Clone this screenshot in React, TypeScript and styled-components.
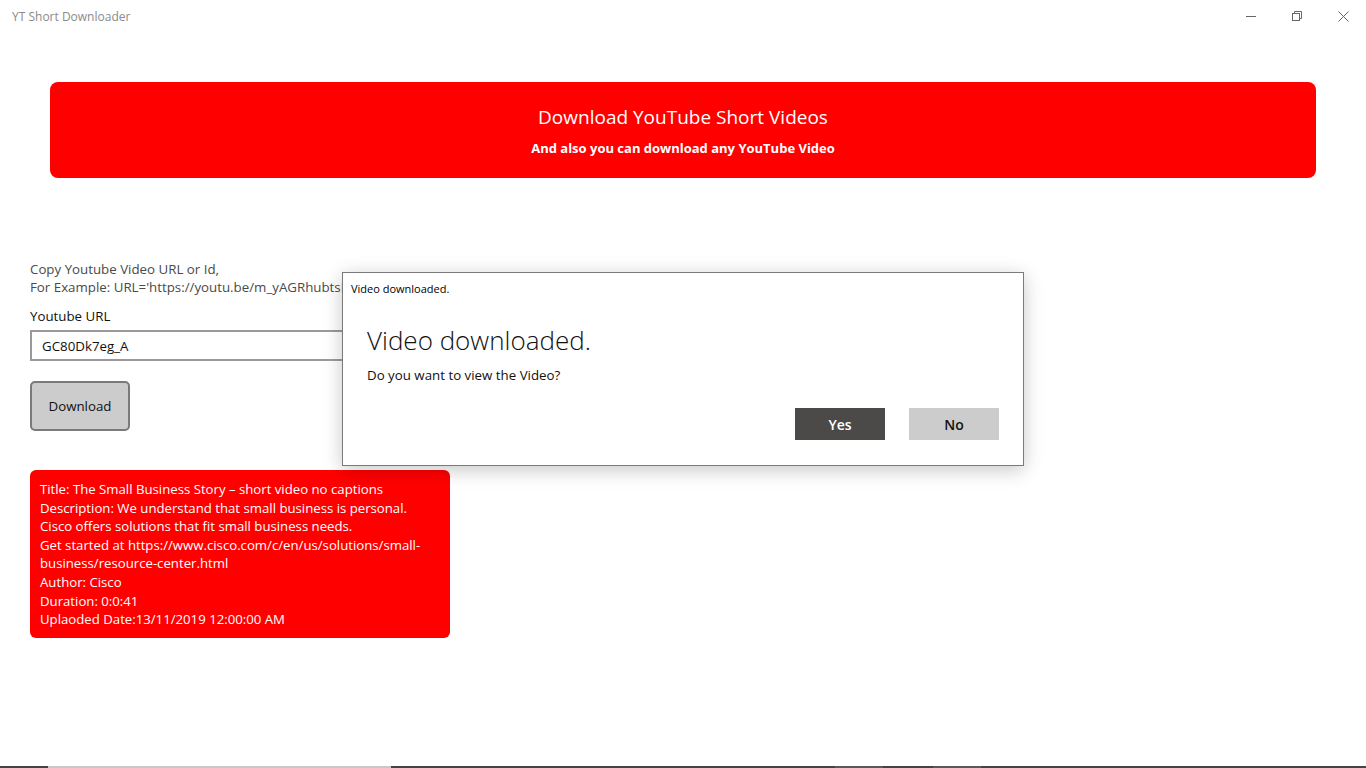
import styled, { createGlobalStyle } from "styled-components";

const GlobalStyle = createGlobalStyle`
  html, body {
    margin: 0;
    padding: 0;
    background: #ffffff;
    font-family: "Open Sans", "Noto Sans", sans-serif;
  }
  * { box-sizing: border-box; }
`;

const info = [
  "Title: The Small Business Story \u2013 short video no captions",
  "Description: We understand that small business is personal.",
  "Cisco offers solutions that fit small business needs.",
  "Get started at https://www.cisco.com/c/en/us/solutions/small-business/resource-center.html",
  "Author: Cisco",
  "Duration: 0:0:41",
  "Uplaoded Date:13/11/2019 12:00:00 AM",
];

export default function App() {
  return (
    <>
      <GlobalStyle />
      <Window>
        <TitleBar>
          <AppTitle>YT Short Downloader</AppTitle>
          <Controls>
            <ControlButton aria-label="minimize">
              <svg width="10" height="10" viewBox="0 0 10 10">
                <path d="M0 5.5h10" stroke="#666" strokeWidth="1" />
              </svg>
            </ControlButton>
            <ControlButton aria-label="restore">
              <svg width="10" height="10" viewBox="0 0 10 10" fill="none">
                <rect x="0.5" y="2.5" width="7" height="7" stroke="#666" />
                <path d="M2.5 2.5V0.5h7v7h-2" stroke="#666" />
              </svg>
            </ControlButton>
            <ControlButton aria-label="close">
              <svg width="11" height="11" viewBox="0 0 11 11">
                <path d="M0.5 0.5l10 10M10.5 0.5l-10 10" stroke="#666" strokeWidth="1" />
              </svg>
            </ControlButton>
          </Controls>
        </TitleBar>

        <Content>
          <Banner>
            <BannerTitle>Download YouTube Short Videos</BannerTitle>
            <BannerSub>And also you can download any YouTube Video</BannerSub>
          </Banner>

          <Form>
            <Hint>
              Copy Youtube Video URL or Id,
              <br />
              For Example: URL='https://youtu.be/m_yAGRhubtsI' or Id='m_yAGRhubtsI'
            </Hint>
            <FieldLabel>Youtube URL</FieldLabel>
            <UrlInput defaultValue="GC80Dk7eg_A" />
            <DownloadButton>Download</DownloadButton>
            <InfoCard>
              {info.map((line) => (
                <div key={line}>{line}</div>
              ))}
            </InfoCard>
          </Form>
        </Content>

        <Dialog>
          <DialogCaption>Video downloaded.</DialogCaption>
          <DialogBody>
            <DialogHeading>Video downloaded.</DialogHeading>
            <DialogText>Do you want to view the Video?</DialogText>
            <DialogActions>
              <DialogButton $primary>Yes</DialogButton>
              <DialogButton>No</DialogButton>
            </DialogActions>
          </DialogBody>
        </Dialog>

        <Taskbar>
          <TaskSegment $w={48} />
          <TaskSegment $w={343} $light />
          <TaskSegment $w={444} />
          <TaskSegment $w={48} $mid />
          <TaskSegment $w={50} />
          <TaskSegment $w={48} $mid />
          <TaskSegment $w={385} />
        </Taskbar>
      </Window>
    </>
  );
}

const Window = styled.div`
  position: relative;
  width: 1366px;
  height: 768px;
  overflow: hidden;
  background: #fff;
  display: flex;
  flex-direction: column;
`;

const TitleBar = styled.div`
  height: 32px;
  display: flex;
  align-items: center;
  justify-content: space-between;
  padding-left: 12px;
`;

const AppTitle = styled.div`
  font-size: 12px;
  color: #8a8a8a;
`;

const Controls = styled.div`
  display: flex;
  height: 100%;
`;

const ControlButton = styled.div`
  width: 46px;
  height: 32px;
  display: flex;
  align-items: center;
  justify-content: center;
`;

const Content = styled.div`
  flex: 1;
  display: flex;
  flex-direction: column;
`;

const Banner = styled.div`
  margin: 50px 50px 0;
  height: 96px;
  background: #ff0000;
  border-radius: 8px;
  color: #fff;
  display: flex;
  flex-direction: column;
  align-items: center;
  padding-top: 22px;
`;

const BannerTitle = styled.div`
  font-size: 19px;
  line-height: 26px;
`;

const BannerSub = styled.div`
  font-size: 13px;
  font-weight: 700;
  margin-top: 9px;
`;

const Form = styled.div`
  margin: 82px 0 0 30px;
  width: 420px;
  display: flex;
  flex-direction: column;
  align-items: flex-start;
  font-size: 13.3px;
`;

const Hint = styled.div`
  width: 312px;
  overflow: hidden;
  color: #4a4a4a;
  line-height: 18px;
  white-space: nowrap;
`;

const FieldLabel = styled.div`
  margin-top: 11px;
  color: #111;
  line-height: 18px;
`;

const UrlInput = styled.input`
  margin-top: 5px;
  width: 500px;
  height: 31px;
  border: 2px solid #9a9a9a;
  padding: 0 10px;
  font-family: inherit;
  font-size: 13.3px;
  color: #111;
  outline: none;
`;

const DownloadButton = styled.button`
  margin-top: 20px;
  width: 100px;
  height: 50px;
  background: #cccccc;
  border: 2px solid #7a7a7a;
  border-radius: 5px;
  font-family: inherit;
  font-size: 13.3px;
  color: #111;
`;

const InfoCard = styled.div`
  margin-top: 39px;
  width: 420px;
  background: #ff0000;
  color: #fff;
  border-radius: 6px;
  padding: 10px 10px 9px;
  font-size: 13.2px;
  line-height: 18.6px;
`;

const Dialog = styled.div`
  position: absolute;
  left: 342px;
  top: 272px;
  width: 682px;
  height: 194px;
  background: #fff;
  border: 1px solid #7a7a7a;
  box-shadow: 0 4px 18px rgba(0, 0, 0, 0.22);
  display: flex;
  flex-direction: column;
`;

const DialogCaption = styled.div`
  height: 30px;
  padding: 8px 0 0 8px;
  font-size: 11px;
  color: #000;
`;

const DialogBody = styled.div`
  padding: 19px 24px 0 24px;
  display: flex;
  flex-direction: column;
`;

const DialogHeading = styled.div`
  font-size: 26px;
  font-weight: 300;
  line-height: 36px;
  color: #111;
`;

const DialogText = styled.div`
  margin-top: 8px;
  font-size: 13.3px;
  color: #111;
`;

const DialogActions = styled.div`
  margin-top: 24px;
  display: flex;
  justify-content: flex-end;
  gap: 24px;
`;

const DialogButton = styled.button<{ $primary?: boolean }>`
  width: 90px;
  height: 32px;
  border: none;
  background: ${(p) => (p.$primary ? "#4c4a48" : "#cccccc")};
  color: ${(p) => (p.$primary ? "#fff" : "#111")};
  font-family: inherit;
  font-size: 14px;
  font-weight: 600;
`;

const Taskbar = styled.div`
  height: 2px;
  display: flex;
`;

const TaskSegment = styled.div<{ $w: number; $light?: boolean; $mid?: boolean }>`
  width: ${(p) => p.$w}px;
  height: 2px;
  background: ${(p) => (p.$light ? "#c8c8c8" : p.$mid ? "#5a5a5a" : "#444")};
`;
